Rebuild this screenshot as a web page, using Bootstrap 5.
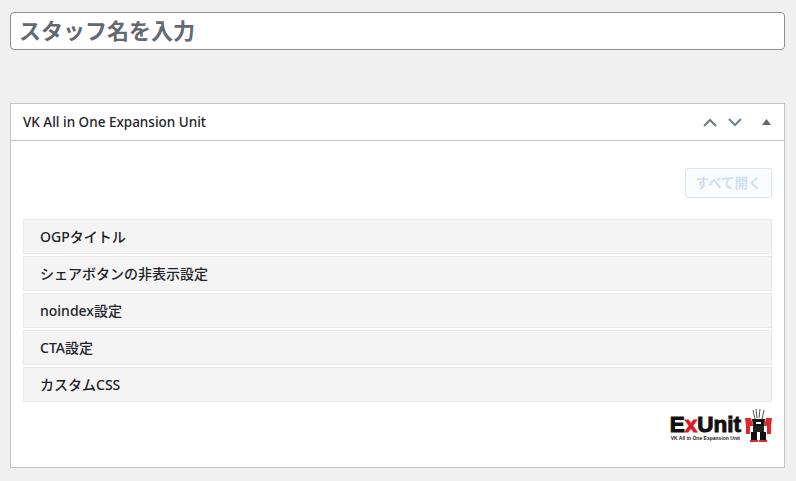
<!DOCTYPE html>
<html lang="ja">
<head>
<meta charset="utf-8">
<title>Staff</title>
<link href="https://cdn.jsdelivr.net/npm/bootstrap@5.3.0/dist/css/bootstrap.min.css" rel="stylesheet">
<style>
html,body{height:481px;overflow:hidden}
body{background:#f0f0f1;font-family:"Noto Sans","Noto Sans CJK JP",sans-serif;color:#1d2327;padding:12px 11px 0 10px}
.title-in{display:block;width:100%;height:38px;border:1px solid #8c8f94;border-radius:4px;background:#fff;font-size:22px;font-weight:700;color:#646970;padding:0 8px;line-height:34px}
.box-w{margin-top:53px;height:365px;background:#fff;border:1px solid #c3c4c7}
.box-h{height:37px;border-bottom:1px solid #c3c4c7;padding:0 12px}
.box-t{font-size:13.5px;font-weight:500;color:#1d2327}
.box-b{padding:27px 12px 0}
.open-b{width:87px;height:30px;border:1px solid #d5e5f2;border-radius:3px;background:#fbfcfe;color:#cfe0ef;font-size:13.5px;font-weight:600;padding:0}
.acc-r{height:35px;background:#f4f4f4;border:1px solid #e8e8e8;padding:0 16px;font-size:14px;font-weight:500;color:#1d2327}
.acc-l{gap:2px;margin-top:21px}
.logo-w{margin-top:6px;height:35px;gap:3px;margin-right:-1px}
.logo-t{padding-top:5px;text-align:center}
.logo-m{font:900 22.5px/20px "Liberation Sans",sans-serif;color:#111;-webkit-text-stroke:1px #111}
.logo-m i{font-style:normal;color:#e0191f;-webkit-text-stroke:1px #e0191f}
.logo-s{font:700 5px/6px "Liberation Sans",sans-serif;color:#222;white-space:nowrap}
</style>
</head>
<body>
<div class="title-in">スタッフ名を入力</div>
<div class="box-w">
  <div class="box-h d-flex align-items-center justify-content-between">
    <span class="box-t">VK All in One Expansion Unit</span>
    <div class="d-flex align-items-center">
      <svg width="14" height="9" viewBox="0 0 14 9"><path d="M1 8L7 2l6 6" fill="none" stroke="#6f7a7a" stroke-width="2"/></svg>
      <svg width="14" height="9" viewBox="0 0 14 9" style="margin-left:11px"><path d="M1 1l6 6 6-6" fill="none" stroke="#6a8296" stroke-width="2"/></svg>
      <svg width="9" height="6" viewBox="0 0 9 6" style="margin-left:20px;margin-right:1px"><path d="M4.500 0l4.500 6H0z" fill="#646970"/></svg>
    </div>
  </div>
  <div class="box-b">
    <div class="d-flex justify-content-end"><button class="open-b" type="button">すべて開く</button></div>
    <div class="acc-l d-flex flex-column">
      <div class="acc-r d-flex align-items-center">OGPタイトル</div>
      <div class="acc-r d-flex align-items-center">シェアボタンの非表示設定</div>
      <div class="acc-r d-flex align-items-center">noindex設定</div>
      <div class="acc-r d-flex align-items-center">CTA設定</div>
      <div class="acc-r d-flex align-items-center">カスタムCSS</div>
    </div>
    <div class="logo-w d-flex justify-content-end align-items-center">
      <div class="logo-t"><div class="logo-m">E<i>x</i>Unit</div><div class="logo-s">VK All in One Expansion Unit</div></div>
      <svg width="29" height="34" viewBox="0 0 29 34">
        <path d="M9 1l2 9M12 0l1 9M16 0l-1 9M20 1l-2 9" stroke="#555" stroke-width="1"/>
        <path d="M1 9h6l2 8H2z M22 9h6l-1 8h-7z" fill="#e0252b"/>
        <path d="M8 10h13l-1 7H9z" fill="#111"/>
        <path d="M12 13h5v2h-5z" fill="#fff"/>
        <path d="M2 17h4v8H2z M23 17h4v8h-4z" fill="#e0252b"/>
        <path d="M9 17h11v6H9z" fill="#222"/>
        <path d="M7 23h6v8H7z M16 23h6v8h-6z" fill="#111"/>
        <path d="M6 31h8v2H6z M15 31h8v2h-8z" fill="#e0252b"/>
      </svg>
    </div>
  </div>
</div>
<script src="https://cdn.jsdelivr.net/npm/bootstrap@5.3.0/dist/js/bootstrap.bundle.min.js"></script>
</body>
</html>
